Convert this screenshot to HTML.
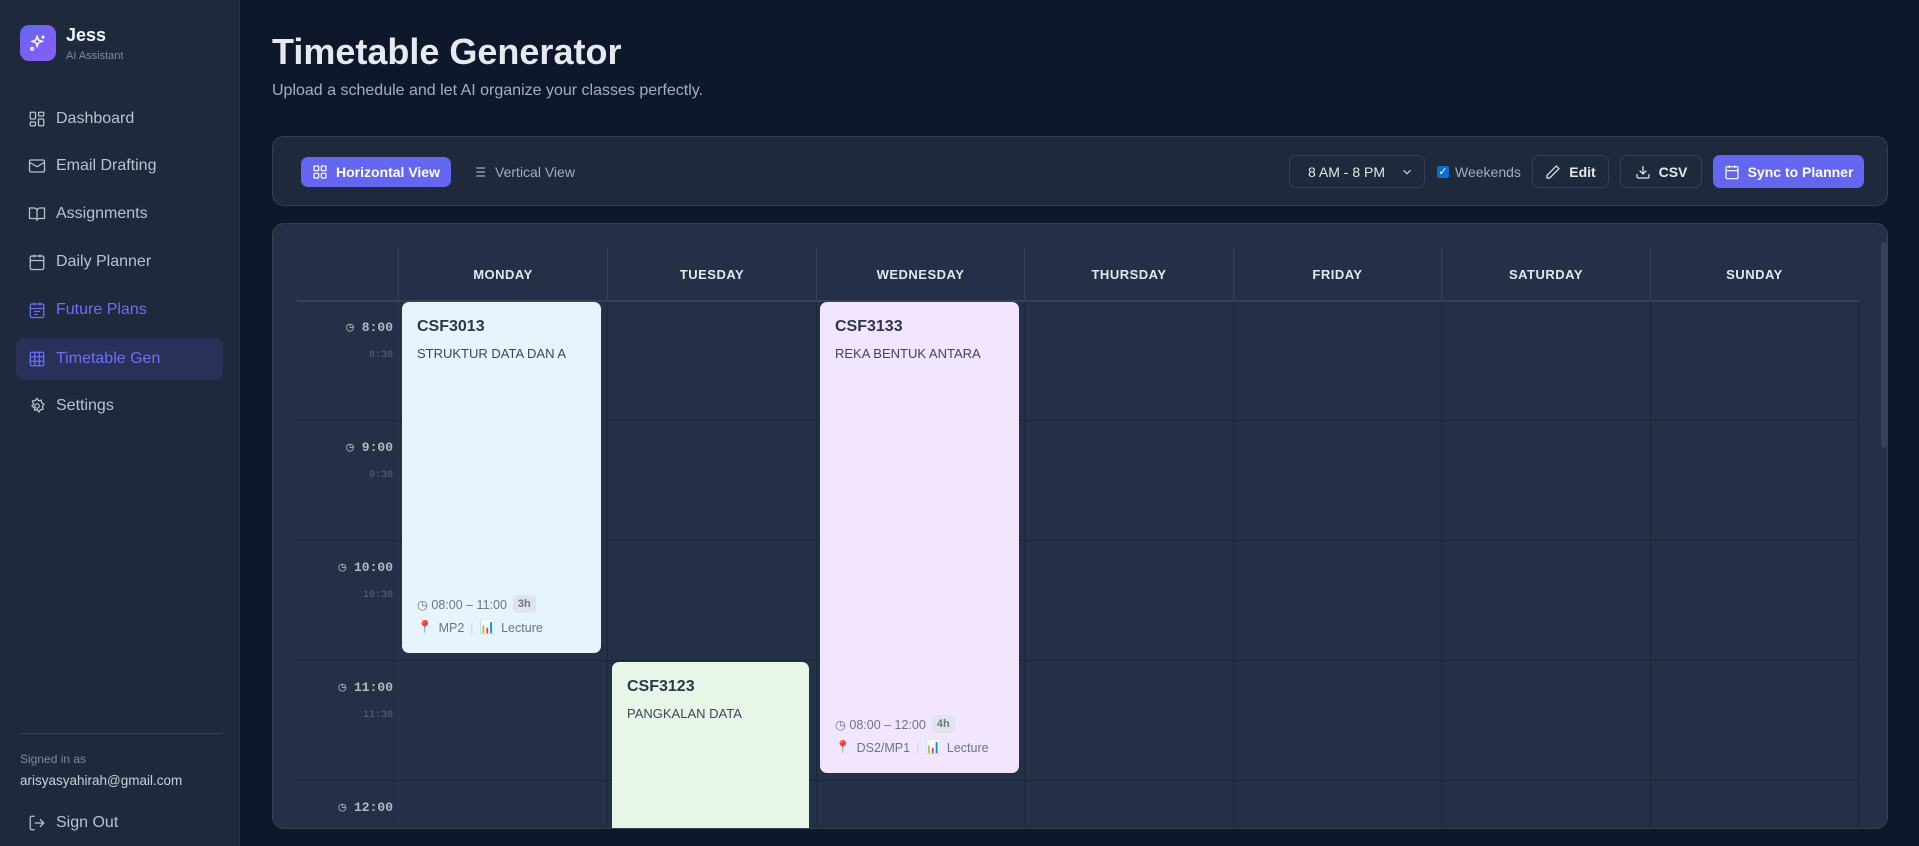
<!DOCTYPE html>
<html><head><meta charset="utf-8"><style>
*{box-sizing:border-box;margin:0;padding:0}
body{width:1919px;height:846px;overflow:hidden;background:#0f172a;font-family:"Liberation Sans",sans-serif;color:#e2e8f0;position:relative}
.sb{position:absolute;left:0;top:0;width:240px;height:846px;background:#1e293b;border-right:1px solid #273449}
.logo{position:absolute;left:20px;top:25px;width:36px;height:36px;border-radius:9px;background:linear-gradient(135deg,#6366f1,#8b5cf6);display:flex;align-items:center;justify-content:center}
.nm{position:absolute;left:66px;top:25px;font-size:18px;font-weight:bold;color:#f1f5f9}
.sub{position:absolute;left:66px;top:50px;font-size:11px;color:#7c8aa0}
.nav{position:absolute;left:16px;width:207px;height:42px;display:flex;align-items:center;padding-left:12px;font-size:16px;color:#b8c2d1;border-radius:8px}
.nav svg{width:18px;height:18px;margin-right:10px;fill:none;stroke:currentColor;stroke-width:1.7}
.nav.act{background:#2a3158;color:#6d6ff5}
.nav.fp{color:#6d6ff5}
.div{position:absolute;left:20px;top:733px;width:203px;height:1px;background:#334155}
h1{position:absolute;left:272px;top:31px;font-size:36px;font-weight:bold;color:#e5e9f0}
.st{position:absolute;left:272px;top:82px;font-size:16px;color:#a3aec0}
.tb{position:absolute;left:272px;top:136px;width:1616px;height:70px;background:#1e293b;border:1px solid #334155;border-radius:12px}
.btn{position:absolute;height:30px;display:flex;align-items:center;justify-content:center;font-size:14px;border-radius:7px;gap:8px}
.btn svg{width:16px;height:16px;fill:none;stroke:currentColor;stroke-width:1.8}
.ob{border:1px solid #334155;background:#1e293b;color:#e2e8f0;font-weight:bold}
.grid{position:absolute;left:272px;top:223px;width:1616px;height:606px;background:#243047;border:1px solid #334155;border-radius:12px;overflow:hidden}
.hd{position:absolute;top:24px;height:52px;border-left:1px solid #34425a;font-size:13px;font-weight:bold;color:#e2e8f0;display:flex;align-items:center;justify-content:center;letter-spacing:.5px}
.hl{position:absolute;height:1px;background:#34425a}
.vl{position:absolute;width:1px;background:#1c2639}
.tl{position:absolute;left:24px;width:96px;text-align:right;font-family:"Liberation Mono",monospace;line-height:1.6}
.tl b{font-size:13px;color:#aebcc4}
.tl i{font-style:normal;font-size:10px;color:#5b687c}
.ev{position:absolute;border-radius:7px;padding:16px 15px;color:#2d3748}
.ev .c{font-size:16px;font-weight:bold;color:#2d3748}
.ev .d{font-size:13px;margin-top:10px;color:#3b4658}
.ev .m{position:absolute;left:15px;font-size:12.5px;color:#6b7585;display:flex;align-items:center;gap:6px}
.pill{background:#dfe5ec;border-radius:4px;padding:3px 5px;font-size:11px;font-weight:bold;color:#6b7585}
</style></head><body>
<div class="sb">
<div class="logo"><svg width="20" height="20" viewBox="0 0 24 24" fill="none" stroke="#fff" stroke-width="1.8"><path d="M11 4l1.6 4.4L17 10l-4.4 1.6L11 16l-1.6-4.4L5 10l4.4-1.6z"/><path d="M18 3v4M16 5h4"/><circle cx="5" cy="19" r="1.6"/></svg></div>
<div class="nm">Jess</div><div class="sub">AI Assistant</div>
<div class="nav" style="top:98px"><svg viewBox="0 0 24 24"><rect x="3" y="3" width="7" height="9" rx="1"/><rect x="14" y="3" width="7" height="5" rx="1"/><rect x="14" y="12" width="7" height="9" rx="1"/><rect x="3" y="16" width="7" height="5" rx="1"/></svg>Dashboard</div>
<div class="nav" style="top:145px"><svg viewBox="0 0 24 24"><rect x="2" y="4" width="20" height="16" rx="2"/><path d="M22 7l-10 6L2 7"/></svg>Email Drafting</div>
<div class="nav" style="top:193px"><svg viewBox="0 0 24 24"><path d="M2 4h6a4 4 0 014 4v13a3 3 0 00-3-3H2zM22 4h-6a4 4 0 00-4 4v13a3 3 0 013-3h7z"/></svg>Assignments</div>
<div class="nav" style="top:241px"><svg viewBox="0 0 24 24"><rect x="3" y="4" width="18" height="18" rx="2"/><path d="M16 2v4M8 2v4M3 10h18M8 14h.01M12 14h.01M16 14h.01M8 18h.01M12 18h.01M16 18h.01"/></svg>Daily Planner</div>
<div class="nav fp" style="top:289px"><svg viewBox="0 0 24 24"><rect x="3" y="4" width="18" height="18" rx="2"/><path d="M16 2v4M8 2v4M3 10h18M8 14h8M8 18h5"/></svg>Future Plans</div>
<div class="nav act" style="top:338px"><svg viewBox="0 0 24 24"><rect x="3" y="3" width="18" height="18" rx="2"/><path d="M3 9h18M3 15h18M9 3v18M15 3v18"/></svg>Timetable Gen</div>
<div class="nav" style="top:385px"><svg viewBox="0 0 24 24"><circle cx="12" cy="12" r="3"/><path d="M12 2l2 3 3.5-.8.8 3.5 3 2-2 3 .8 3.5-3.5.8-2 3-2-3-3.5.8-.8-3.5-3-2 2-3L6 5.5l3.5-.8z"/></svg>Settings</div>
<div class="div"></div>
<div style="position:absolute;left:20px;top:752px;font-size:12px;color:#7c8aa0">Signed in as</div>
<div style="position:absolute;left:20px;top:773px;font-size:13.5px;color:#c7d0dc">arisyasyahirah@gmail.com</div>
<div class="nav" style="top:802px;height:42px"><svg viewBox="0 0 24 24"><path d="M9 21H5a2 2 0 01-2-2V5a2 2 0 012-2h4M16 17l5-5-5-5M21 12H9"/></svg>Sign Out</div>
</div>
<h1>Timetable Generator</h1>
<div class="st">Upload a schedule and let AI organize your classes perfectly.</div>
<div class="tb">
<div class="btn" style="left:28px;top:20px;width:150px;background:#6366f1;color:#fff;font-weight:bold;font-size:14px"><svg viewBox="0 0 24 24"><rect x="3" y="3" width="7" height="7" rx="1"/><rect x="14" y="3" width="7" height="7" rx="1"/><rect x="3" y="14" width="7" height="7" rx="1"/><rect x="14" y="14" width="7" height="7" rx="1"/></svg>Horizontal View</div>
<div class="btn" style="left:190px;top:20px;width:120px;color:#a3aec0"><svg viewBox="0 0 24 24"><path d="M8 6h13M8 12h13M8 18h13M3 6h.01M3 12h.01M3 18h.01"/></svg>Vertical View</div>
<div class="btn ob" style="left:1016px;top:18px;width:136px;height:33px;font-weight:normal;justify-content:space-between;padding:0 10px 0 18px">8 AM - 8 PM <svg viewBox="0 0 24 24" style="width:14px"><path d="M6 9l6 6 6-6"/></svg></div>
<div style="position:absolute;left:1164px;top:29px;width:12px;height:12px;background:#0a6ed1;border-radius:2px;color:#fff;font-size:11px;line-height:12px;text-align:center">✓</div>
<div style="position:absolute;left:1182px;top:27px;font-size:14px;color:#a3aec0">Weekends</div>
<div class="btn ob" style="left:1259px;top:18px;width:77px;height:33px"><svg viewBox="0 0 24 24"><path d="M17 3l4 4L7 21H3v-4z"/></svg>Edit</div>
<div class="btn ob" style="left:1347px;top:18px;width:82px;height:33px"><svg viewBox="0 0 24 24"><path d="M21 15v4a2 2 0 01-2 2H5a2 2 0 01-2-2v-4M7 10l5 5 5-5M12 15V3"/></svg>CSV</div>
<div class="btn" style="left:1440px;top:18px;width:151px;height:33px;background:#6366f1;color:#fff;font-weight:bold"><svg viewBox="0 0 24 24"><rect x="3" y="4" width="18" height="18" rx="2"/><path d="M16 2v4M8 2v4M3 10h18"/></svg>Sync to Planner</div>
</div>
<div class="grid">
<div class="hd" style="left:125px;width:209px">MONDAY</div>
<div class="hd" style="left:334px;width:209px">TUESDAY</div>
<div class="hd" style="left:543px;width:208px">WEDNESDAY</div>
<div class="hd" style="left:751px;width:209px">THURSDAY</div>
<div class="hd" style="left:960px;width:208px">FRIDAY</div>
<div class="hd" style="left:1168px;width:209px">SATURDAY</div>
<div class="hd" style="left:1377px;width:208px;border-right:none">SUNDAY</div>
<div class="hl" style="left:24px;top:76px;width:1562px;height:2px"></div>
<div class="hl" style="left:24px;top:196px;width:1562px;background:#1c2639"></div>
<div class="hl" style="left:24px;top:316px;width:1562px;background:#1c2639"></div>
<div class="hl" style="left:24px;top:436px;width:1562px;background:#1c2639"></div>
<div class="hl" style="left:24px;top:556px;width:1562px;background:#1c2639"></div>
<div class="vl" style="left:125px;top:78px;height:530px;background:#2c384d"></div>
<div class="vl" style="left:334px;top:78px;height:530px"></div>
<div class="vl" style="left:543px;top:78px;height:530px"></div>
<div class="vl" style="left:751px;top:78px;height:530px"></div>
<div class="vl" style="left:960px;top:78px;height:530px"></div>
<div class="vl" style="left:1168px;top:78px;height:530px"></div>
<div class="vl" style="left:1377px;top:78px;height:530px"></div>
<div class="vl" style="left:1585px;top:78px;height:530px"></div>
<div style="position:absolute;left:1608px;top:18px;width:6px;height:206px;background:#34425a;border-radius:3px"></div>
<div class="tl" style="top:91px"><b>◷ 8:00</b><br><i>8:30</i></div>
<div class="tl" style="top:211px"><b>◷ 9:00</b><br><i>9:30</i></div>
<div class="tl" style="top:331px"><b>◷ 10:00</b><br><i>10:30</i></div>
<div class="tl" style="top:451px"><b>◷ 11:00</b><br><i>11:30</i></div>
<div class="tl" style="top:571px"><b>◷ 12:00</b><br><i>12:30</i></div>
<div class="ev" style="left:129px;top:78px;width:199px;height:351px;background:#e7f3fd"><div class="c">CSF3013</div><div class="d">STRUKTUR DATA DAN A</div>
<div class="m" style="top:293px">◷ 08:00 – 11:00 <span class="pill">3h</span></div>
<div class="m" style="top:318px"><span style="color:#e0245e">📍</span>MP2 <span style="color:#cbd5e1">|</span> <span>📊</span>Lecture</div></div>
<div class="ev" style="left:339px;top:438px;width:197px;height:180px;background:#e8f6e8"><div class="c">CSF3123</div><div class="d">PANGKALAN DATA</div></div>
<div class="ev" style="left:547px;top:78px;width:199px;height:471px;background:#f1e6fd"><div class="c">CSF3133</div><div class="d">REKA BENTUK ANTARA</div>
<div class="m" style="top:413px">◷ 08:00 – 12:00 <span class="pill">4h</span></div>
<div class="m" style="top:438px"><span style="color:#e0245e">📍</span>DS2/MP1 <span style="color:#cbd5e1">|</span> <span>📊</span>Lecture</div></div>
</div>
</body></html>
